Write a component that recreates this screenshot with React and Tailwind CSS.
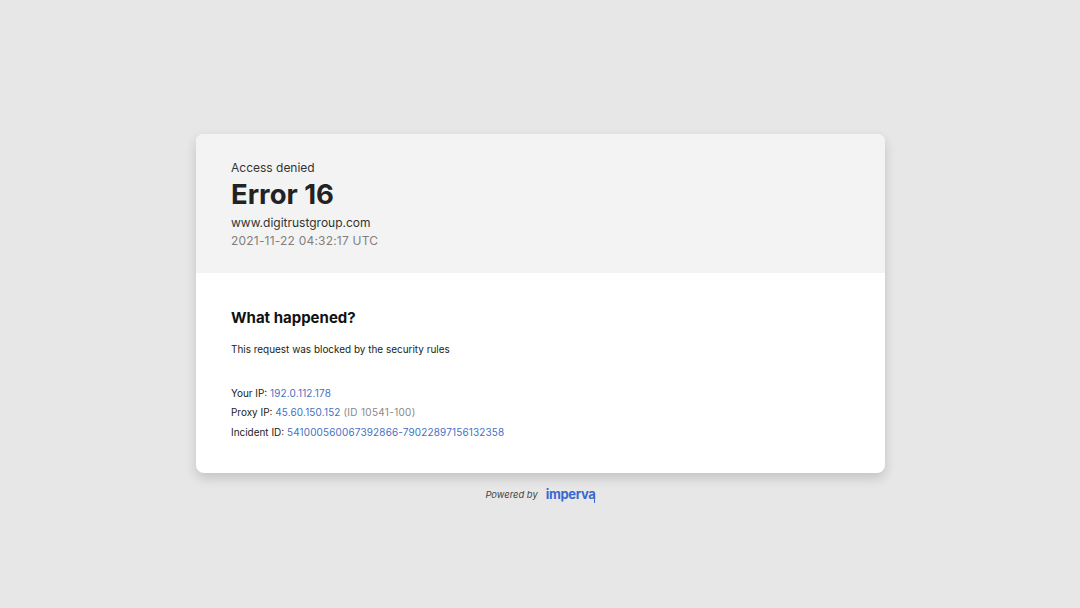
export default function App() {
  return (
    <div className="h-[608px] w-full bg-[#e7e7e7] pt-[134px] font-['Inter',sans-serif] overflow-hidden">
      <div className="mx-auto w-[689px] rounded-lg overflow-hidden bg-white shadow-[0_5px_12px_rgba(0,0,0,0.16)]">
        <div className="h-[139px] bg-[#f3f3f3] pl-[35.5px] pt-[26px]">
          <div className="text-[12px] leading-[16px] text-[#333333]">Access denied</div>
          <div className="mt-[2px] text-[27.5px] leading-[33px] font-bold text-[#222222]">Error 16</div>
          <div className="mt-[3px] text-[12px] leading-[18px] text-[#333333]">www.digitrustgroup.com</div>
          <div className="text-[12px] leading-[18px] tracking-[0.2px] text-[#808080]">2021-11-22 04:32:17 UTC</div>
        </div>
        <div className="h-[200px] pl-[35.5px] pt-[35px]">
          <div className="text-[15px] leading-[20px] font-bold text-[#111111]">What happened?</div>
          <div className="mt-[13px] text-[9.95px] leading-[16px] text-[#222222]">This request was blocked by the security rules</div>
          <div className="mt-[26.6px] text-[9.95px] leading-[19.5px] text-[#222222]">
            <div>Your IP: <span className="tracking-[0.17px] text-[#4470c4]">192.0.112.178</span></div>
            <div>Proxy IP: <span className="tracking-[0.17px] text-[#4470c4]">45.60.150.152</span> <span className="tracking-[0.33px] text-[#888888]">(ID 10541-100)</span></div>
            <div>Incident ID: <span className="tracking-[0.17px] text-[#4470c4]">541000560067392866-79022897156132358</span></div>
          </div>
        </div>
      </div>
      <div className="mt-[13px] flex items-center justify-center gap-2 pl-[1px]">
        <span className="text-[9.4px] leading-[18px] italic text-[#444444]">Powered by</span>
        <span className="relative -top-[1px] text-[13px] leading-[18px] font-bold tracking-[-0.3px] text-[#3a68d0]">
          imperva
          <span className="absolute right-[0.5px] bottom-[0.5px] h-[3.5px] w-[1.5px] rounded-b-sm bg-[#3a68d0]"></span>
        </span>
      </div>
    </div>
  );
}
